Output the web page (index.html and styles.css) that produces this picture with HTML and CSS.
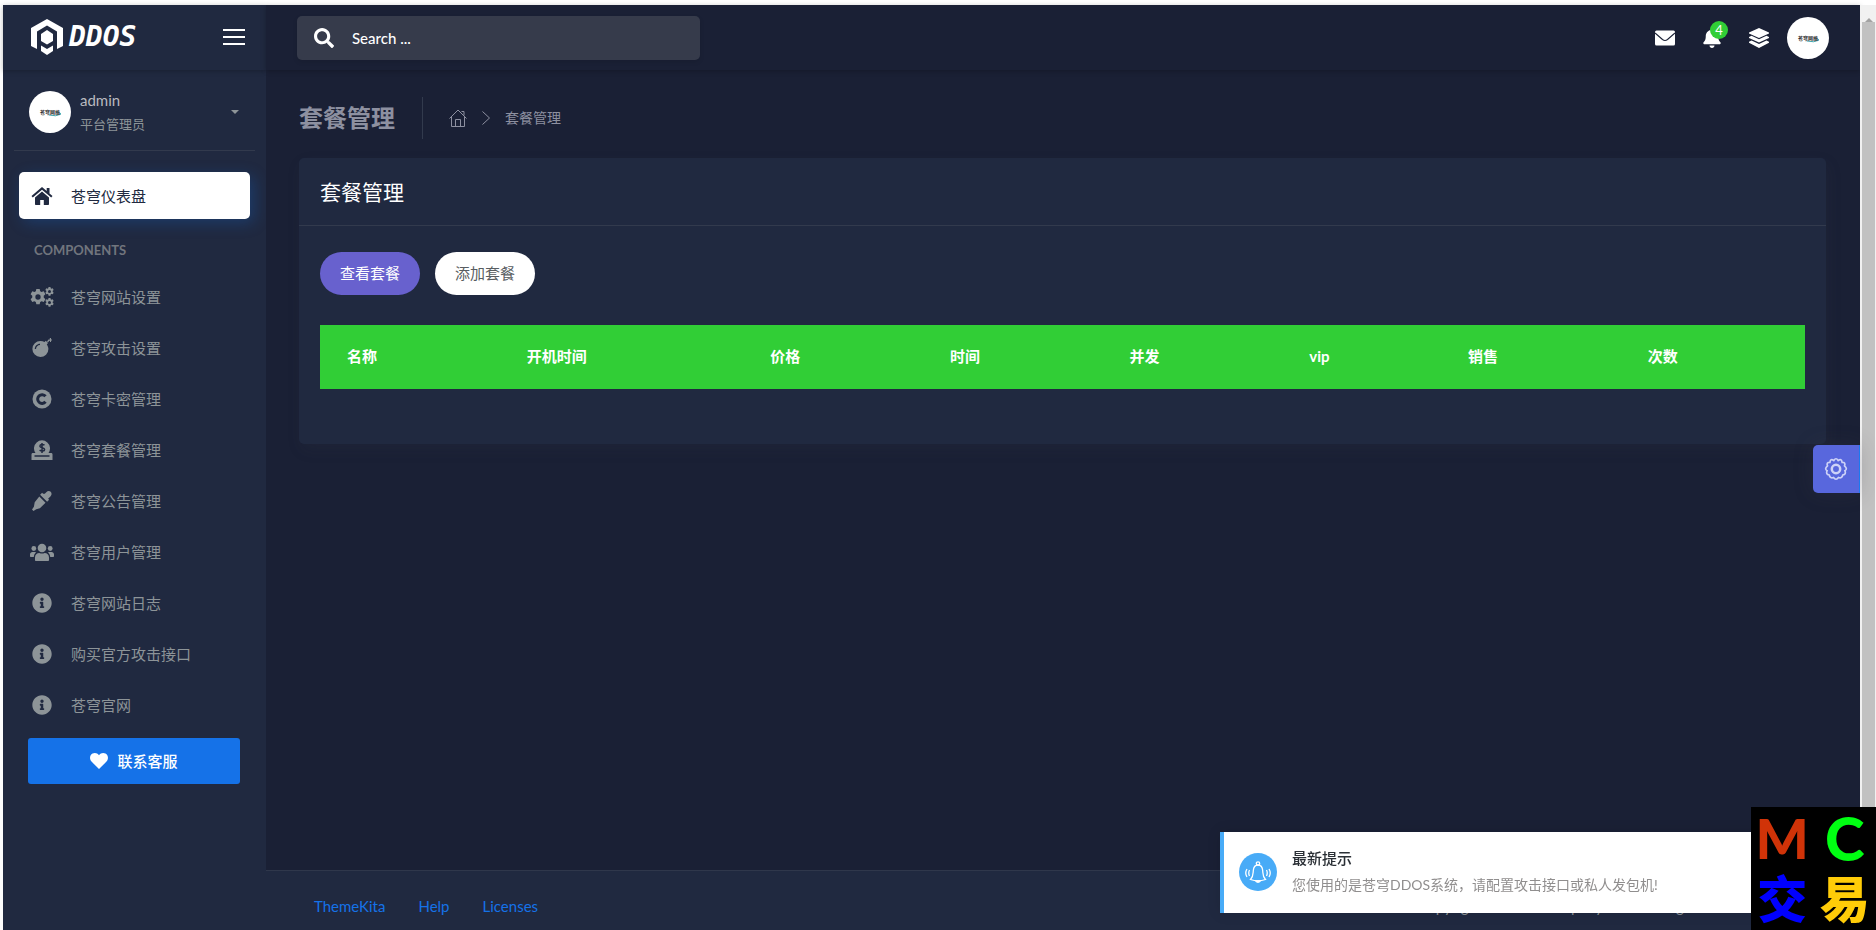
FILE: index.html
```html
<!DOCTYPE html>
<html lang="zh-CN">
<head>
<meta charset="utf-8">
<title>套餐管理</title>
<link rel="stylesheet" href="styles.css">
</head>
<body>
<svg class="defs" aria-hidden="true">
  <symbol id="info" viewBox="0 0 512 512"><path d="M256 8C119 8 8 119 8 256s111 248 248 248 248-111 248-248S393 8 256 8zm0 110c23 0 42 19 42 42s-19 42-42 42-42-19-42-42 19-42 42-42zm56 254c0 7-5 12-12 12h-88c-7 0-12-5-12-12v-24c0-7 5-12 12-12h12v-64h-12c-7 0-12-5-12-12v-24c0-7 5-12 12-12h64c7 0 12 5 12 12v100h12c7 0 12 5 12 12v24z"/></symbol>
  <symbol id="gear" viewBox="-12 -12 24 24"><path fill-rule="evenodd" d="M-2.500-12h5l.8 3.400 2 1.100 3.300-1 2.500 4.300-2.500 2.500v2.400l2.500 2.500-2.500 4.300-3.300-1-2 1.100-.8 3.400h-5l-.8-3.400-2-1.100-3.300 1-2.500-4.300 2.500-2.500V-1.700l-2.500-2.500 2.500-4.300 3.300 1 2-1.100zM0-4a4 4 0 1 0 0 8 4 4 0 0 0 0-8z"/></symbol>
</svg>
<div class="app">
  <aside class="sidebar">
    <div class="logo-bar">
      <a class="logo" href="#" aria-label="DDOS">
        <svg width="32" height="36" viewBox="0 0 32 36" fill="#fff"><path d="M16 0l16 9v18l-6 3V12.500L16 6.500 6 12.500V30l-6-3V9z"/><path d="M16 11l6 4v7l-6 3.500-6-3.500v-7z"/><path d="M10 26.500l6 3.500 6-3.500V32l-6 4-6-4z"/></svg>
        <span>DDOS</span>
      </a>
      <button class="toggle" aria-label="菜单"><span></span><span></span><span></span></button>
    </div>
    <button class="user">
      <svg class="avatar" viewBox="0 0 42 42"><circle cx="21" cy="21" r="21" fill="#fff"/><path d="M20 24q7 2 12-1-4-3-5-1" fill="none" stroke="#3fa5ad"/><text x="11" y="23" class="brand-text">苍穹网络</text></svg>
      <span class="user-text"><span class="user-name">admin</span><span class="user-role">平台管理员</span></span>
      <span class="caret"></span>
    </button>
    <nav class="menu">
      <a class="item active" href="#"><svg viewBox="0 0 24 20"><path d="M12 1L1.500 10l1.300 1.500L12 3.700l9.200 7.800 1.300-1.500-3-2.600V2h-2.800v3zM12 5.500L5 11.400V18c0 .6.400 1 1 1h4.200v-5h3.600v5H18c.6 0 1-.4 1-1v-6.600z"/></svg><span>苍穹仪表盘</span></a>
      <h4 class="section">COMPONENTS</h4>
      <a class="item" href="#"><svg viewBox="0 0 24 20"><use href="#gear" x="0" y="2" width="16" height="16"/><use href="#gear" x="15" y="0" width="9" height="9"/><use href="#gear" x="15" y="11" width="9" height="9"/></svg><span>苍穹网站设置</span></a>
      <a class="item" href="#"><svg viewBox="0 0 24 20"><path fill-rule="evenodd" d="M10.500 3c1.500 0 2.800.4 4 1l1.300-1.200 2.200 2.200-1.200 1.500c.9 1.300 1.600 2.900 1.600 4.500a8 8 0 1 1-7.900-8zM6 11c0-2.200 1.800-4 4-4V5.700C7.100 5.700 4.800 8 4.800 11z"/><path d="M17 3.500l1.500-2h1.300V0h1.200v1.500h1v1h-1v1.600h-1V2.800l-.7-.1-1.300 1.800z"/></svg><span>苍穹攻击设置</span></a>
      <a class="item" href="#"><svg viewBox="0 0 24 20"><circle cx="12" cy="10" r="9.500"/><path class="cut-line" d="M15.500 12.800A4.400 4.400 0 1 1 15.500 7.300"/></svg><span>苍穹卡密管理</span></a>
      <a class="item" href="#"><svg viewBox="0 0 24 20"><path d="M3 13h2.500a8 8 0 1 1 13 0H21c1 0 1.500.5 1.500 1.500V20h-21v-5.500C1.500 13.500 2 13 3 13z"/><path class="cut-thin" d="M4.500 16h15M14.500 5.200c-1.500-1-4.600-.9-4.600 1s4.700 1.200 4.700 3.200-3.300 2-5 .8M12 3v10"/></svg><span>苍穹套餐管理</span></a>
      <a class="item" href="#"><svg viewBox="0 0 24 20"><path d="M14.800 2.700l1.500-1.500c3-3 7.200.9 4.300 4l-2.500 2.500 1 1-2 2-7-7 2-2 1 1zM9.300 5.500l6.200 6.200-5.600 5.600-3.700.9L3.500 20l-1.500-1.500 1.900-2.700.8-4.600z"/></svg><span>苍穹公告管理</span></a>
      <a class="item" href="#"><svg viewBox="0 0 24 20"><circle cx="12" cy="6" r="4.300"/><circle cx="3.800" cy="6.500" r="2.400"/><circle cx="20.200" cy="6.500" r="2.400"/><path d="M5 18v-2.500c0-3 2-4.500 4.300-4.500 2 .8 3.400.8 5.400 0 2.300 0 4.300 1.500 4.300 4.500V18c0 .6-.5 1-1 1H6c-.6 0-1-.4-1-1zM0 14v-1.500C0 11 1 10 2.500 10h2.400l1.300.6C4.700 11.600 4 13 3.800 15H1c-.6 0-1-.4-1-1zM24 14v-1.500c0-1.500-1-2.500-2.500-2.500h-2.400l-1.300.6c1.500 1 2.200 2.400 2.400 4.400H23c.6 0 1-.4 1-1z"/></svg><span>苍穹用户管理</span></a>
      <a class="item" href="#"><svg viewBox="0 0 512 512"><use href="#info"/></svg><span>苍穹网站日志</span></a>
      <a class="item" href="#"><svg viewBox="0 0 512 512"><use href="#info"/></svg><span>购买官方攻击接口</span></a>
      <a class="item" href="#"><svg viewBox="0 0 512 512"><use href="#info"/></svg><span>苍穹官网</span></a>
      <a class="support" href="#"><svg width="18" height="16" viewBox="0 0 18 16" fill="#fff"><path d="M9 16L1.500 8.600C-.8 6-.3 2 2.500.6 5-.6 7.500.3 9 2.200 10.500.3 13-.6 15.500.6c2.800 1.400 3.300 5.400 1 8z"/></svg>联系客服</a>
    </nav>
  </aside>
  <div class="main">
    <header class="topbar">
      <form class="search">
        <button type="button" aria-label="搜索"><svg width="20" height="20" viewBox="0 0 512 512" fill="#fff"><path d="M505 442.700L405.300 343c-4.500-4.500-10.600-7-17-7H372c27.600-35.300 44-79.700 44-128C416 93.100 322.900 0 208 0S0 93.100 0 208s93.100 208 208 208c48.300 0 92.700-16.400 128-44v16.300c0 6.400 2.500 12.500 7 17l99.700 99.700c9.400 9.400 24.600 9.400 33.900 0l28.300-28.300c9.400-9.400 9.400-24.600.1-34zM208 336c-70.700 0-128-57.200-128-128 0-70.700 57.200-128 128-128 70.700 0 128 57.200 128 128 0 70.700-57.200 128-128 128z"/></svg></button>
        <input type="text" placeholder="Search ..." aria-label="Search">
      </form>
      <div class="tools">
        <a href="#" aria-label="邮件"><svg width="20" height="16" viewBox="0 0 20 16"><rect width="20" height="15" y=".5" rx="1.500" fill="#fff"/><path d="M0 3l7.500 6.500q2.500 2 5 0L20 3" fill="none" stroke="#1a2035" stroke-width="1.100"/></svg></a>
        <a href="#" class="bell" aria-label="通知"><svg width="18" height="20" viewBox="0 0 448 512" fill="#fff"><path d="M224 512c35.300 0 64-28.700 64-64H160c0 35.300 28.700 64 64 64zm215.400-149.700c-19.300-20.800-55.500-52-55.500-154.300 0-77.700-54.500-139.900-127.900-155.200V32c0-17.700-14.300-32-32-32s-32 14.300-32 32v20.800C118.600 68.100 64.100 130.300 64.100 208c0 102.300-36.200 133.500-55.500 154.300-6 6.500-8.700 14.200-8.600 21.700.1 16.400 13 32 32.100 32h383.800c19.100 0 32-15.600 32.100-32 0-7.500-2.600-15.200-8.600-21.700z"/></svg><span class="badge">4</span></a>
        <a href="#" aria-label="快捷"><svg width="20" height="20" viewBox="0 0 20 20" fill="#fff"><path d="M10 0l10 4.500v1L10 10 0 5.500v-1zM2.500 7.800L10 11.200l7.500-3.400L20 9v1l-10 4.600L0 10V9zM2.500 12.500L10 16l7.500-3.500 2.500 1.200v1L10 20 0 14.700v-1z"/></svg></a>
        <a href="#" aria-label="账户"><svg class="avatar" viewBox="0 0 42 42"><circle cx="21" cy="21" r="21" fill="#fff"/><path d="M20 24q7 2 12-1-4-3-5-1" fill="none" stroke="#3fa5ad"/><text x="11" y="23" class="brand-text">苍穹网络</text></svg></a>
      </div>
    </header>
    <main class="content">
      <div class="page-head">
        <h1>套餐管理</h1>
        <nav class="crumbs">
          <a href="#" aria-label="首页"><svg width="18" height="18" viewBox="0 0 18 18"><path d="M.5 9.500L9 1l8.500 8.500M2.500 7.500v10h13v-10M12.500 2.500h2.500v4M6.500 17.500v-7h5v7"/></svg></a>
          <svg width="8" height="14" viewBox="0 0 8 14"><path d="M.5.5L7.500 7l-7 6.500"/></svg>
          <a href="#">套餐管理</a>
        </nav>
      </div>
      <section class="card">
        <h2>套餐管理</h2>
        <div class="card-body">
          <div class="pills"><button class="pill on">查看套餐</button><button class="pill">添加套餐</button></div>
          <table>
            <thead><tr><th class="c1">名称</th><th class="c2">开机时间</th><th class="c1">价格</th><th class="c1">时间</th><th class="c1">并发</th><th class="c3">vip</th><th class="c1">销售</th><th>次数</th></tr></thead>
          </table>
        </div>
      </section>
    </main>
    <footer class="footer">
      <nav><a href="#">ThemeKita</a><a href="#">Help</a><a href="#">Licenses</a></nav>
      <p>Copyright © 2021.Company name All rights reserved.</p>
    </footer>
  </div>
  <div class="scroll"><span class="arrow"></span><span class="thumb"></span></div>
</div>
<button class="settings" aria-label="设置"><svg width="24" height="24" viewBox="-12 -12 24 24"><path d="M-2.200-8.500Q0-12 2.200-8.500 5.500-10.800 6.100-6.700 10-6.800 8.500-3.200 12 0 8.900 1.700 10.500 5.300 6.800 6 5.800 9.800 2.500 8.500 0 12-2.500 8.500-5.800 9.800-6.800 6-10.500 5.300-8.900 1.700-12 0-8.500-3.200-10-6.800-6.100-6.700-5.500-10.800-2.200-8.500z"/><circle r="4.200" class="hub"/></svg></button>
<div class="toast" role="alert">
  <span class="toast-icon"><svg width="28" height="24" viewBox="0 0 28 24"><path d="M6.500 19.500c3-3 2.500-6 2.800-9C9.600 7 11.500 5 14 5s4.400 2 4.700 5.500c.3 3-.2 6 2.800 9-4.500 1.500-10.500 1.500-15 0zM11.500 21q2.500 2.500 5 0"/><circle cx="14" cy="3.500" r="1.700"/><path d="M5.500 10q-1.500 3 0 6M3 9q-2.500 4 0 8M22.500 10q1.500 3 0 6M25 9q2.500 4 0 8"/></svg></span>
  <div><strong>最新提示</strong><p>您使用的是苍穹DDOS系统，请配置攻击接口或私人发包机!</p></div>
</div>
<div class="stamp"><span class="red">M</span><span class="green">C</span><span class="blue">交</span><span class="gold">易</span></div>
</body>
</html>
```
FILE: styles.css
```css
* { box-sizing: border-box; }
body {
  margin: 0;
  padding: 5px 0 0 3px;
  background: #fff;
  color: #8d9498;
  font-family: Lato, "Noto Sans CJK SC", sans-serif;
  font-size: 15px;
  line-height: 20px;
}
a { color: inherit; text-decoration: none; }
button { border: 0; padding: 0; background: none; color: inherit; font: inherit; }
h1, h2, h4, p { margin: 0; }
svg { flex: none; }
.defs { position: absolute; width: 0; height: 0; }
.brand-text { font-size: 5px; font-weight: 700; fill: #333; }
.avatar { display: block; width: 42px; height: 42px; }

.app { display: flex; min-height: calc(100vh - 5px); }
.sidebar { width: 263px; flex: none; background: #202940; box-shadow: 4px 4px 10px rgba(69, 65, 78, .06); }
.logo-bar {
  display: flex; align-items: center; justify-content: space-between;
  height: 65px; padding: 0 21px 2px 28px;
  box-shadow: 0 1px 5px rgba(0, 0, 0, .25);
}
.logo { display: flex; align-items: center; gap: 6px; color: #fff; }
.logo span { font-family: "DejaVu Sans Mono", monospace; font-size: 28px; font-style: italic; font-weight: 700; line-height: 36px; }
.toggle { display: flex; flex-direction: column; gap: 5px; }
.toggle span { width: 22px; height: 2px; background: #fff; }
.user {
  display: flex; align-items: center; gap: 9px;
  width: calc(100% - 22px); height: 81px;
  margin: 0 11px; padding: 4px 16px 0 15px;
  border-bottom: 1px solid #323a4d; text-align: left;
}
.user-text { display: flex; flex-direction: column; gap: 4px; flex: 1; }
.user-name { color: #b9babf; }
.user-role { font-size: 13px; }
.caret { border: 4px solid transparent; border-top-color: #8d9498; border-bottom: 0; }
.menu { padding: 21px 16px 0; }
.item { display: flex; align-items: center; gap: 17px; height: 47px; margin-bottom: 4px; padding: 0 12px 0 11px; }
.item svg { width: 24px; height: 20px; fill: #8d9498; }
.item .cut-line { fill: none; stroke: #202940; stroke-width: 3; }
.item .cut-thin { fill: none; stroke: #202940; stroke-width: 1.5; }
.active { height: 47px; background: #fff; color: #202940; border-radius: 5px; box-shadow: 4px 4px 15px rgba(21, 114, 232, .25); }
.item.active svg { fill: #202940; }
.section { padding: 17px 15px 13px; font-size: 13px; font-weight: 700; line-height: 20px; color: #71757d; }
.support {
  display: flex; align-items: center; justify-content: center; gap: 9px;
  height: 46px; margin: 10px 10px 0 9px;
  border-radius: 3px; background: #1572e8; color: #fff; font-weight: 500;
}

.main { display: flex; flex-direction: column; flex: 1; min-width: 0; background: #1a2035; }
.topbar {
  display: flex; align-items: center; justify-content: space-between;
  height: 65px; padding: 0 31px;
  box-shadow: 0 1px 5px rgba(0, 0, 0, .25);
}
.search { display: flex; align-items: center; width: 403px; height: 44px; padding: 0 17px; gap: 18px; background: #363b4b; border-radius: 5px; box-shadow: 0 2px 5px rgba(0, 0, 0, .1); }
.search button { display: flex; }
.search input { flex: 1; min-width: 0; border: 0; padding: 0; background: none; color: #fff; font: inherit; font-weight: 500; outline: 0; }
.search input::placeholder { color: #fff; opacity: 1; }
.tools { display: flex; align-items: center; gap: 28px; }
.tools a { display: flex; }
.tools a:last-child { margin-left: -10px; }
.bell { position: relative; }
.badge {
  position: absolute; top: -7px; left: 7px;
  width: 18px; height: 18px; border-radius: 9px;
  background: #31ce36; color: #fff; font-size: 13px; line-height: 18px; text-align: center;
}
.content { flex: 1; padding: 25px 34px 0 33px; }
.page-head { display: flex; align-items: center; height: 46px; margin-bottom: 17px; }
h1 { padding-right: 27px; border-right: 1px solid #323a4d; font-size: 24px; font-weight: 700; line-height: 42px; color: #8d90a0; }
.crumbs { display: flex; align-items: center; gap: 15px; padding-left: 26px; font-size: 14px; color: #8d90a0; }
.crumbs a { display: flex; }
.crumbs svg { fill: none; stroke: #8d90a0; stroke-width: 1; }
.card { background: #202940; border-radius: 5px; box-shadow: 2px 6px 15px rgba(69, 65, 78, .1); }
.card h2 { padding: 16px 21px; border-bottom: 1px solid #323a4d; font-size: 21px; font-weight: 400; line-height: 35px; color: #fff; }
.card-body { padding: 26px 21px 55px; }
.pills { display: flex; gap: 15px; margin-bottom: 30px; }
.pill { height: 43px; padding: 0 20px 2px; border-radius: 22px; background: #fff; color: #585d61; line-height: 20px; }
.pill.on { background: #6861ce; color: #fff; }
table { width: 100%; border-collapse: collapse; table-layout: fixed; background: #31ce36; color: #fff; }
th { height: 64px; padding: 0 27px 2px; text-align: left; font-weight: 700; }
.c1 { width: 12.1%; }
.c2 { width: 16.4%; }
.c3 { width: 10.7%; }
.footer { display: flex; align-items: center; justify-content: space-between; height: 60px; padding: 10px 92px 0 48px; background: #202940; border-top: 1px solid #2f374b; }
.footer nav { display: flex; gap: 33px; color: #1572e8; }

.scroll { width: 16px; padding: 0 1px 0 2px; background: #f1f1f1; display: flex; flex-direction: column; align-items: center; }
.arrow { height: 17px; border: 4px solid transparent; border-bottom-color: #a3a3a3; border-top-width: 9px; }
.thumb { flex: 1; width: 13px; background: #c1c1c1; }

.settings {
  position: fixed; top: 445px; right: 16px;
  display: flex; align-items: center; justify-content: center;
  width: 47px; height: 48px;
  background: #5867dd; border-right: 1px solid #1a7af0; border-radius: 5px 0 0 5px;
  box-shadow: 0 0 20px rgba(69, 65, 78, .22);
}
.settings svg { fill: none; stroke: #cdd2f7; stroke-width: 1.7; }
.settings .hub { stroke-width: 2.5; }
.toast {
  position: fixed; right: 20px; bottom: 17px;
  display: flex; align-items: center; gap: 15px;
  width: 636px; height: 81px; padding: 0 15px 2px;
  background: #fff; border-left: 4px solid #48abf7;
  box-shadow: 0 0 13px rgba(0, 0, 0, .12);
}
.toast-icon { display: flex; align-items: center; justify-content: center; width: 38px; height: 38px; border-radius: 50%; background: #48abf7; }
.toast-icon svg { fill: none; stroke: #fff; stroke-width: 1.3; }
.toast strong { display: block; margin-bottom: 7px; color: #2a2f35; font-size: 15px; font-weight: 500; }
.toast p { color: #908e8e; font-size: 14px; }
.stamp {
  position: fixed; right: 0; bottom: 0;
  display: grid; grid-template-columns: 1fr 1fr; place-items: center;
  width: 125px; height: 123px;
  background: #000; font-size: 50px; font-weight: 900; line-height: 60px;
}
.red { color: #d03308; font-size: 56px; }
.green { color: #00ff12; font-size: 60px; }
.blue { color: #0000ff; }
.gold { color: #ffcc08; }
```
